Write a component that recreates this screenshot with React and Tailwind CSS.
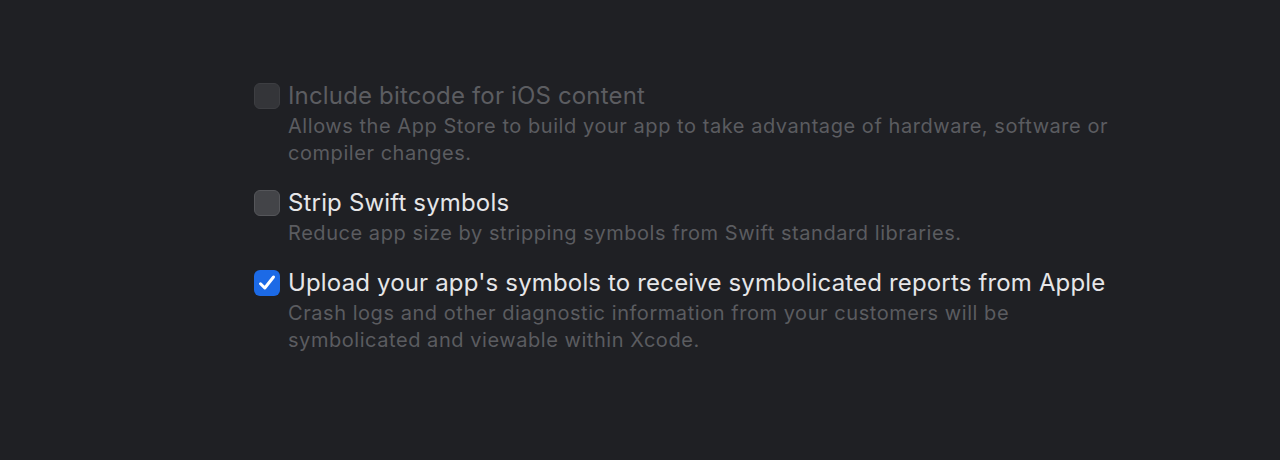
import React from "react";

function Box({ checked, disabled }) {
  if (checked) {
    return (
      <div className="mt-[2px] h-[26px] w-[26px] shrink-0 rounded-[6px] bg-[#1c6ae6]">
        <svg width="26" height="26" viewBox="0 0 26 26" fill="none">
          <path d="M6.5 13.8 L10.8 18 L19.5 7" stroke="white" strokeWidth="3" strokeLinecap="round" strokeLinejoin="round" />
        </svg>
      </div>
    );
  }
  return (
    <div
      className={
        "mt-[2px] h-[26px] w-[26px] shrink-0 rounded-[6px] border " +
        (disabled ? "border-[#3d3e42] bg-[#343539]" : "border-[#55565a] bg-[#434448]")
      }
    />
  );
}

function Row({ title, desc, checked, disabled }) {
  return (
    <div className="flex gap-[8px]">
      <Box checked={checked} disabled={disabled} />
      <div className="flex flex-col">
        <div className={"text-[24px] leading-[30px] tracking-[0.16px] " + (disabled ? "text-[#5c5d61]" : "text-[#e6e6e8]")}>{title}</div>
        <div className="mt-[2px] text-[20px] leading-[27px] tracking-[0.55px] text-[#5b5c60]">
          {desc.map((l, i) => (
            <div key={i}>{l}</div>
          ))}
        </div>
      </div>
    </div>
  );
}

export default function App() {
  return (
    <div className="h-[460px] w-[1280px] bg-[#1f2024] pl-[254px] pt-[81px]" style={{ fontFamily: "Inter, 'Noto Sans', sans-serif" }}>
      <div className="flex flex-col gap-[21px]">
        <Row
          disabled
          title="Include bitcode for iOS content"
          desc={["Allows the App Store to build your app to take advantage of hardware, software or", "compiler changes."]}
        />
        <Row title="Strip Swift symbols" desc={["Reduce app size by stripping symbols from Swift standard libraries."]} />
        <Row
          checked
          title="Upload your app's symbols to receive symbolicated reports from Apple"
          desc={["Crash logs and other diagnostic information from your customers will be", "symbolicated and viewable within Xcode."]}
        />
      </div>
    </div>
  );
}
